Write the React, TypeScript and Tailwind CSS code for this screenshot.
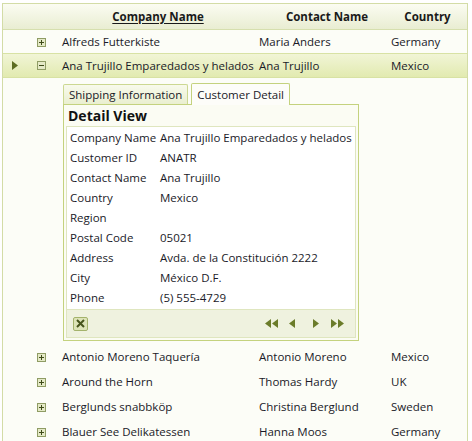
import React from "react";

const before = [{ company: "Alfreds Futterkiste", contact: "Maria Anders", country: "Germany" }];
const after = [
  { company: "Antonio Moreno Taquería", contact: "Antonio Moreno", country: "Mexico" },
  { company: "Around the Horn", contact: "Thomas Hardy", country: "UK" },
  { company: "Berglunds snabbköp", contact: "Christina Berglund", country: "Sweden" },
  { company: "Blauer See Delikatessen", contact: "Hanna Moos", country: "Germany" },
];

const details = [
  ["Company Name", "Ana Trujillo Emparedados y helados"],
  ["Customer ID", "ANATR"],
  ["Contact Name", "Ana Trujillo"],
  ["Country", "Mexico"],
  ["Region", ""],
  ["Postal Code", "05021"],
  ["Address", "Avda. de la Constitución 2222"],
  ["City", "México D.F."],
  ["Phone", "(5) 555-4729"],
];

function ToggleBox({ open }: { open?: boolean }) {
  return (
    <svg width="9" height="9" viewBox="0 0 9 9">
      <rect x="0.5" y="0.5" width="8" height="8" fill="#e4e9c6" stroke="#8f9c64" />
      <rect x="2" y="4" width="5" height="1" fill="#3d4a18" />
      {!open && <rect x="4" y="2" width="1" height="5" fill="#3d4a18" />}
    </svg>
  );
}

function Row({ company, contact, country, h = "h-[25px]" }: { company: string; contact: string; country: string; h?: string }) {
  return (
    <div className={`flex items-center ${h}`}>
      <div className="w-[34px]" />
      <div className="w-[21px] flex items-center pt-[1px]">
        <ToggleBox />
      </div>
      <div className="w-[200px] pl-[4px] whitespace-nowrap">{company}</div>
      <div className="w-[132px] pl-[1px]">{contact}</div>
      <div className="pl-[1px]">{country}</div>
    </div>
  );
}

// double/single arrow glyphs of the pager
function Arrows({ dir, n }: { dir: "l" | "r"; n: 1 | 2 }) {
  const w = n === 2 ? 13 : 6;
  const tri = (x: number) =>
    dir === "l" ? `M${x + 6} 0 L${x} 4.5 L${x + 6} 9 Z` : `M${x} 0 L${x + 6} 4.5 L${x} 9 Z`;
  return (
    <svg width={w} height="9" viewBox={`0 0 ${w} 9`}>
      <path d={tri(0)} fill="#6b7c2a" />
      {n === 2 && <path d={tri(7)} fill="#6b7c2a" />}
    </svg>
  );
}

export default function App() {
  return (
    <div className="w-[472px] h-[441px] overflow-hidden bg-white pt-[3px] pl-[2px] text-[11.5px] text-[#1a1a28]" style={{ fontFamily: '"Open Sans", "Noto Sans", sans-serif' }}>
      <div className="w-[466px] h-[460px] border border-[#d3dca6] bg-[#fcfdf7]">
        {/* Header */}
        <div className="flex items-center h-[26px] border-b border-[#d6dfae] bg-gradient-to-b from-[#fbfcf2] to-[#e9edd2] font-bold text-[#1a1a1a]">
          <div className="w-[55px]" />
          <div className="w-[200px] text-center underline underline-offset-2">Company Name</div>
          <div className="w-[132px] text-center pl-[6px]">Contact Name</div>
          <div className="flex-1 text-center pr-[2px]">Country</div>
        </div>

        {before.map((r) => (
          <Row key={r.company} {...r} h="h-[23px]" />
        ))}

        {/* Selected row */}
        <div className="flex items-center h-[25px] border-y border-[#d8e2a4] bg-gradient-to-b from-[#f1f5d6] to-[#e2eab0]">
          <div className="w-[34px] pl-[9px] flex items-center">
            <svg width="6" height="9" viewBox="0 0 6 9"><path d="M0 0 L6 4.5 L0 9 Z" fill="#5d6d22" /></svg>
          </div>
          <div className="w-[21px] flex items-center">
            <ToggleBox open />
          </div>
          <div className="w-[200px] pl-[4px] whitespace-nowrap">Ana Trujillo Emparedados y helados</div>
          <div className="w-[132px] pl-[1px]">Ana Trujillo</div>
          <div className="pl-[1px]">Mexico</div>
        </div>

        {/* Detail */}
        <div className="pl-[60px] pt-[5px] pb-[3px]">
          <div className="flex items-end h-[21px]">
            <div className="h-[20px] px-[5px] flex items-center border border-[#ccd891] border-b-0 rounded-t-[2px] bg-gradient-to-b from-[#f8faec] to-[#eaefd0]">
              Shipping Information
            </div>
            <div className="ml-[3px] h-[22px] px-[5px] flex items-center border border-[#c4d27e] border-b-0 rounded-t-[2px] bg-[#fdfdf9] relative top-[1px]">
              Customer Detail
            </div>
          </div>
          <div className="w-[296px] border border-[#c4d27e] bg-[#fbfcf3] px-[2px] pb-[2px]">
            <div className="font-bold text-[14px] h-[21px] leading-[21px] pl-[2px] text-[#111]">Detail View</div>
            <div className="border border-[#dfe6bf] bg-white">
              <div className="pl-[3px] pt-[1px]">
                {details.map(([k, v]) => (
                  <div key={k} className="flex items-center h-[20px] whitespace-nowrap">
                    <div className="w-[90px]">{k}</div>
                    <div>{v}</div>
                  </div>
                ))}
              </div>
              <div className="mt-[1px] h-[28px] border-t border-[#dfe6bf] bg-[#eff2df] flex items-center px-[6px]">
                <div className="w-[15px] h-[14px] border border-[#a4b36c] bg-[#dde4b8] rounded-[2px] flex items-center justify-center">
                  <svg width="9" height="9" viewBox="0 0 9 9">
                    <path d="M1 1 L8 8 M8 1 L1 8" stroke="#46541c" strokeWidth="2" />
                  </svg>
                </div>
                <div className="ml-auto flex items-center pr-[5px]">
                  <Arrows dir="l" n={2} />
                  <div className="ml-[11px]"><Arrows dir="l" n={1} /></div>
                  <div className="ml-[18px]"><Arrows dir="r" n={1} /></div>
                  <div className="ml-[12px]"><Arrows dir="r" n={2} /></div>
                </div>
              </div>
            </div>
          </div>
        </div>

        {after.map((r) => (
          <Row key={r.company} {...r} />
        ))}
      </div>
    </div>
  );
}
